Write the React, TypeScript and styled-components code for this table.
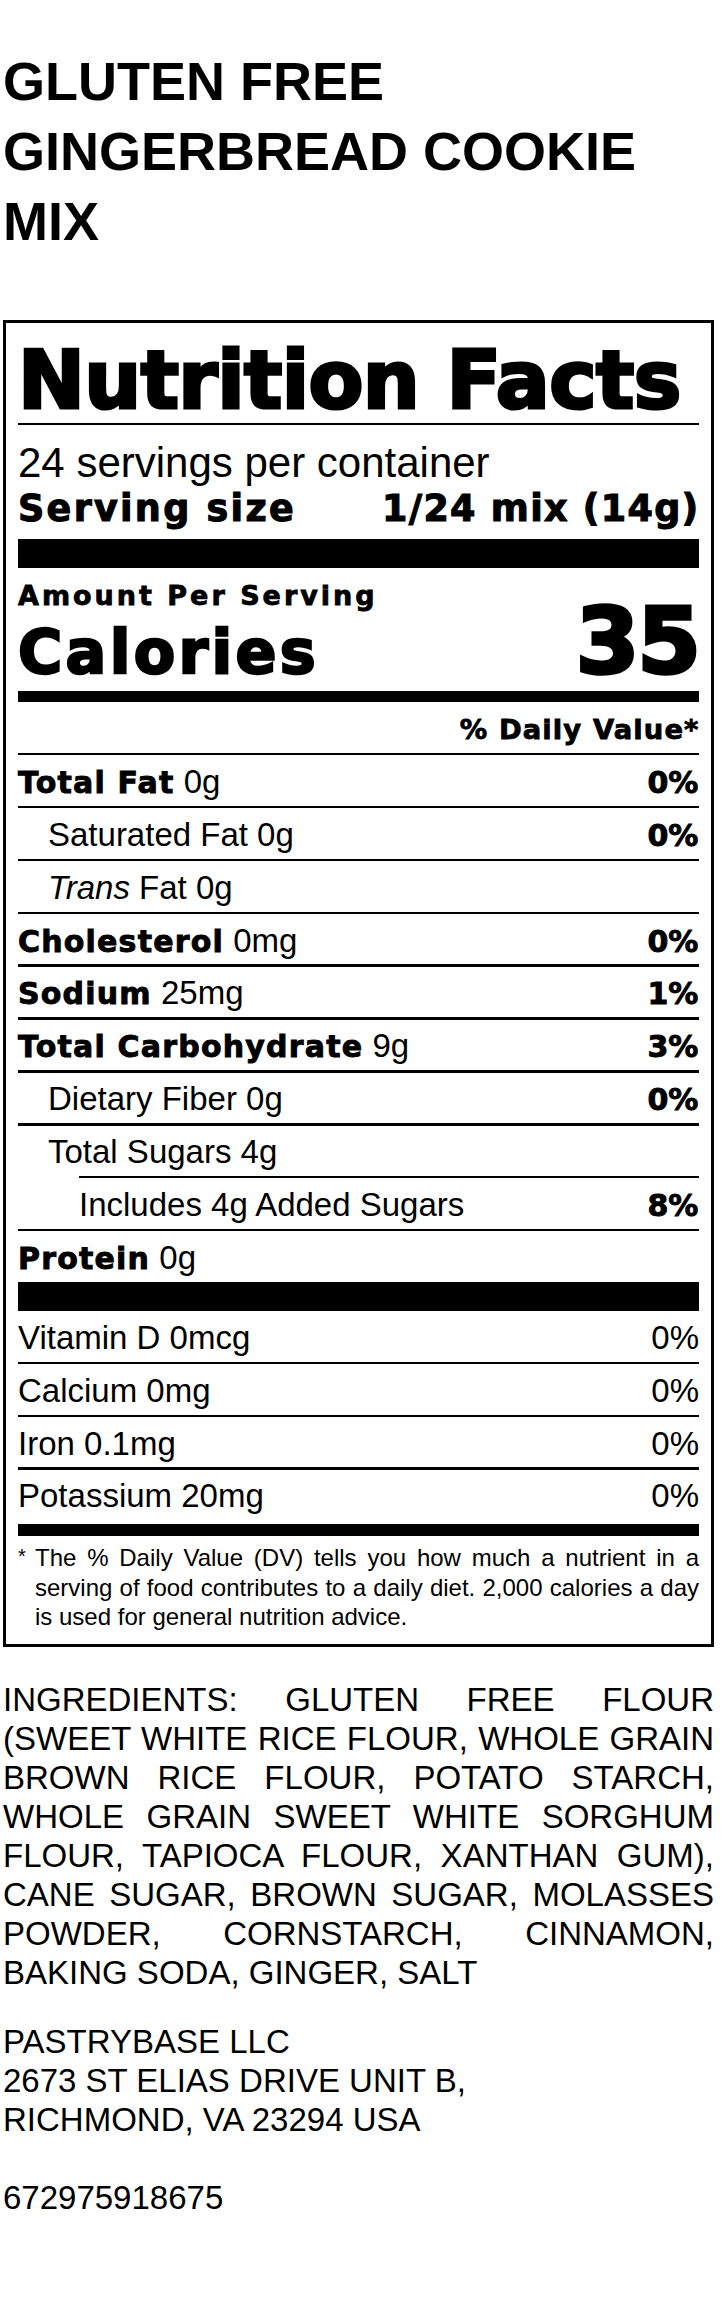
import React from "react";
import styled, { createGlobalStyle } from "styled-components";

const GlobalStyle = createGlobalStyle`
  html, body { margin: 0; padding: 0; background: #fff; }
  body { font-family: "Liberation Sans", Arial, sans-serif; color: #000; }
`;

const HEAVY = `"DejaVu Sans", "Liberation Sans", Arial, sans-serif`;
const REG = `"Liberation Sans", Arial, Helvetica, sans-serif`;

const heavy = (size: number, stroke = 0.03) => `
  font-family: ${HEAVY};
  font-weight: 700;
  font-size: ${size}px;
  -webkit-text-stroke: ${(size * stroke).toFixed(2)}px #000;
`;

const Page = styled.main`
  width: 711px;
  padding: 46.3px 0 0 3px;
`;

const Title = styled.h1`
  margin: 0;
  font-family: ${REG};
  font-weight: 700;
  font-size: 54px;
  line-height: 70px;
`;

const Label = styled.section`
  margin-top: 63.7px;
  width: 711px;
  box-sizing: border-box;
  border: 3px solid #000;
  padding: 12px;
`;

const Heading = styled.h2`
  margin: 3.6px 0 0;
  ${heavy(80, 0.04)}
  line-height: 84px;
  letter-spacing: -0.6px;
  white-space: nowrap;
`;

const Rule = styled.div<{ $h: number; $indent?: number; $mt?: number }>`
  height: ${(p) => p.$h}px;
  margin-left: ${(p) => p.$indent ?? 0}px;
  margin-top: ${(p) => p.$mt ?? 0}px;
  background: #000;
`;

const Servings = styled.p`
  margin: 14.6px 0 0;
  font-family: ${REG};
  font-size: 42px;
  line-height: 46px;
`;

const ServingRow = styled.div`
  display: flex;
  justify-content: space-between;
  ${heavy(36.5)}
  line-height: 46px;
  white-space: nowrap;
`;

const ServingLabel = styled.span`
  letter-spacing: 2.3px;
`;

const ServingValue = styled.span`
  letter-spacing: 1.3px;
  margin-right: -0.6px;
`;

const CaloriesBlock = styled.div`
  display: flex;
  justify-content: space-between;
  align-items: flex-end;
`;

const CaloriesLeft = styled.div`
  display: flex;
  flex-direction: column;
`;

const AmountPer = styled.div`
  margin-top: 12.4px;
  ${heavy(27)}
  line-height: 32px;
  letter-spacing: 3px;
  white-space: nowrap;
`;

const CaloriesWord = styled.div`
  padding-top: 10px;
  ${heavy(60.4, 0.04)}
  line-height: 60px;
  letter-spacing: 3.3px;
`;

const CaloriesValue = styled.div`
  ${heavy(91.5, 0.04)}
  line-height: 81.5px;
  letter-spacing: -2px;
`;

const DailyValue = styled.div`
  height: 51.3px;
  box-sizing: border-box;
  padding-top: 10.5px;
  text-align: right;
  ${heavy(27.4)}
  line-height: 36px;
  letter-spacing: 1.1px;
  margin-right: -0.5px;
`;

const NutrientRow = styled.div<{ $indent?: number }>`
  display: flex;
  justify-content: space-between;
  align-items: baseline;
  height: 50.4px;
  box-sizing: border-box;
  padding: 8.56px 0 0 ${(p) => p.$indent ?? 0}px;
  font-family: ${REG};
  font-size: 33px;
  line-height: 36px;
  white-space: nowrap;
`;

const NutrientName = styled.b`
  ${heavy(30)}
  letter-spacing: 1.2px;
`;

const Percent = styled.span<{ $bold?: boolean }>`
  ${(p) => (p.$bold ? heavy(30) : `font-family: ${REG}; font-size: 33px;`)}
  margin-right: ${(p) => (p.$bold ? 0.6 : 0)}px;
`;

const Footnote = styled.div`
  display: flex;
  padding-top: 7px;
  font-family: ${REG};
  font-size: 24px;
  line-height: 29.8px;
`;

const Asterisk = styled.span`
  flex: none;
  width: 17px;
  font-size: 20px;
  line-height: 26px;
`;

const FootnoteText = styled.p`
  flex: 1;
  margin: 0;
  text-align: justify;
`;

const Ingredients = styled.p`
  margin: 33px 0 0;
  font-family: ${REG};
  font-size: 33px;
  line-height: 39px;
  text-align: justify;
`;

const Address = styled.p`
  margin: 30px 0 0;
  font-family: ${REG};
  font-size: 33px;
  line-height: 39px;
`;

type Nutrient = {
  name?: string;
  amount: React.ReactNode;
  pct?: string;
  indent?: number;
  ruleIndent?: number;
};

const nutrients: Nutrient[] = [
  { name: "Total Fat", amount: "0g", pct: "0%" },
  { amount: "Saturated Fat 0g", pct: "0%", indent: 30 },
  { amount: <><i>Trans</i> Fat 0g</>, indent: 30 },
  { name: "Cholesterol", amount: "0mg", pct: "0%" },
  { name: "Sodium", amount: "25mg", pct: "1%" },
  { name: "Total Carbohydrate", amount: "9g", pct: "3%" },
  { amount: "Dietary Fiber 0g", pct: "0%", indent: 30 },
  { amount: "Total Sugars 4g", indent: 30 },
  { amount: "Includes 4g Added Sugars", pct: "8%", indent: 61, ruleIndent: 61 },
  { name: "Protein", amount: "0g" },
];

const vitamins = [
  { label: "Vitamin D 0mcg", pct: "0%" },
  { label: "Calcium 0mg", pct: "0%" },
  { label: "Iron 0.1mg", pct: "0%" },
  { label: "Potassium 20mg", pct: "0%" },
];

export default function App() {
  return (
    <>
      <GlobalStyle />
      <Page>
        <Title>GLUTEN FREE GINGERBREAD COOKIE MIX</Title>
        <Label>
          <Heading>Nutrition Facts</Heading>
          <Rule $h={2.6} />
          <Servings>24 servings per container</Servings>
          <ServingRow>
            <ServingLabel>Serving size</ServingLabel>
            <ServingValue>1/24 mix (14g)</ServingValue>
          </ServingRow>
          <Rule $h={29.3} $mt={6.8} />
          <CaloriesBlock>
            <CaloriesLeft>
              <AmountPer>Amount Per Serving</AmountPer>
              <CaloriesWord>Calories</CaloriesWord>
            </CaloriesLeft>
            <CaloriesValue>35</CaloriesValue>
          </CaloriesBlock>
          <Rule $h={10.5} $mt={8.8} />
          <DailyValue>% Daily Value*</DailyValue>
          {nutrients.map((n, i) => (
            <React.Fragment key={i}>
              <Rule $h={2.5} $indent={n.ruleIndent} />
              <NutrientRow $indent={n.indent}>
                <span>
                  {n.name && <NutrientName>{n.name}</NutrientName>}
                  {n.name ? " " : ""}
                  {n.amount}
                </span>
                {n.pct && <Percent $bold>{n.pct}</Percent>}
              </NutrientRow>
            </React.Fragment>
          ))}
          <Rule $h={29.5} />
          {vitamins.map((v, i) => (
            <React.Fragment key={v.label}>
              {i > 0 && <Rule $h={2.5} />}
              <NutrientRow>
                <span>{v.label}</span>
                <Percent>{v.pct}</Percent>
              </NutrientRow>
            </React.Fragment>
          ))}
          <Rule $h={11.5} $mt={4} />
          <Footnote>
            <Asterisk>*</Asterisk>
            <FootnoteText>
              The % Daily Value (DV) tells you how much a nutrient in a serving of food
              contributes to a daily diet. 2,000 calories a day is used for general
              nutrition advice.
            </FootnoteText>
          </Footnote>
        </Label>
        <Ingredients>
          INGREDIENTS: GLUTEN FREE FLOUR (SWEET WHITE RICE FLOUR, WHOLE GRAIN BROWN RICE
          FLOUR, POTATO STARCH, WHOLE GRAIN SWEET WHITE SORGHUM FLOUR, TAPIOCA FLOUR,
          XANTHAN GUM), CANE SUGAR, BROWN SUGAR, MOLASSES POWDER, CORNSTARCH, CINNAMON,
          BAKING SODA, GINGER, SALT
        </Ingredients>
        <Address>
          PASTRYBASE LLC
          <br />
          2673 ST ELIAS DRIVE UNIT B,
          <br />
          RICHMOND, VA 23294 USA
          <br />
          <br />
          672975918675
        </Address>
      </Page>
    </>
  );
}
